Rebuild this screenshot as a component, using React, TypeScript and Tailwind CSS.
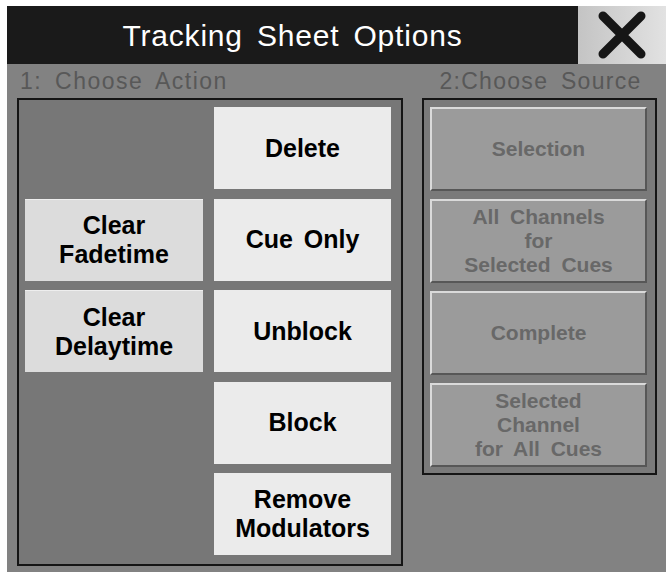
export default function App() {
  const actionsLeft = [
    { row: 2, label: ["Clear", "Fadetime"] },
    { row: 3, label: ["Clear", "Delaytime"] },
  ];
  const actionsRight = [
    ["Delete"],
    ["Cue Only"],
    ["Unblock"],
    ["Block"],
    ["Remove", "Modulators"],
  ];
  const sources = [
    ["Selection"],
    ["All Channels", "for", "Selected Cues"],
    ["Complete"],
    ["Selected", "Channel", "for All Cues"],
  ];

  return (
    <div className="w-[666px] h-[572px] bg-white pt-[6px] pl-[7px] overflow-hidden" style={{ fontFamily: '"Liberation Sans", Arial, sans-serif' }}>
      <div className="flex flex-col h-full bg-[#828282]">
        {/* title bar */}
        <div className="flex h-[58px]">
          <div className="flex-1 bg-[#1a1a1a] flex items-center justify-center">
            <span className="text-white text-[30px] tracking-[0.8px] [word-spacing:5px]">Tracking Sheet Options</span>
          </div>
          <button className="w-[88px] h-full bg-gradient-to-r from-[#c4c4c4] to-[#e2e2e2] flex items-center justify-center">
            <svg width="50" height="50" viewBox="0 0 50 50">
              <path d="M6 6 L44 44 M44 6 L6 44" stroke="#161616" strokeWidth="9" strokeLinecap="round" />
            </svg>
          </button>
        </div>

        <div className="flex pl-[10px] gap-[19px]">
          {/* 1: Choose Action */}
          <div className="w-[386px] flex flex-col">
            <div className="h-[34px] pl-[3px] flex items-center text-[23px] text-[#585858] tracking-[1.5px] [word-spacing:5px]">1: Choose Action</div>
            <div className="h-[468px] border-2 border-[#151515] bg-[#777777] pt-[7px] pl-[6px] grid grid-cols-[178px_177px] grid-rows-[82px_82px_82px_82px_82px] gap-x-[11px] gap-y-[9.5px]">
              {actionsLeft.map((a) => (
                <button
                  key={a.label.join()}
                  className={`col-start-1 ${a.row === 2 ? "row-start-2" : "row-start-3"} bg-[#dcdcdc] border-t border-[#eeeeee] text-black font-bold text-[25px] leading-[29px] flex flex-col items-center justify-center`}
                >
                  {a.label.map((l) => (
                    <span key={l}>{l}</span>
                  ))}
                </button>
              ))}
              {actionsRight.map((a, i) => (
                <button
                  key={a.join()}
                  className={`col-start-2 ${["row-start-1", "row-start-2", "row-start-3", "row-start-4", "row-start-5"][i]} bg-[#ebebeb] text-black font-bold text-[25px] leading-[29px] flex flex-col items-center justify-center [word-spacing:4px]`}
                >
                  {a.map((l) => (
                    <span key={l}>{l}</span>
                  ))}
                </button>
              ))}
            </div>
          </div>

          {/* 2:Choose Source */}
          <div className="w-[235px] flex flex-col">
            <div className="h-[34px] pl-[2px] flex items-center justify-center text-[23px] text-[#585858] tracking-[1.3px] [word-spacing:5px]">2:Choose Source</div>
            <div className="h-[377px] border-2 border-[#151515] bg-[#7a7a7a] pt-[7px] pl-[6px] flex flex-col gap-[8px]">
              {sources.map((s) => (
                <button
                  key={s.join()}
                  disabled
                  className="w-[217px] h-[84px] bg-[#9b9b9b] border-t-2 border-l-2 border-t-[#dadada] border-l-[#dadada] border-b-2 border-r-2 border-b-[#575757] border-r-[#575757] text-[#686868] font-bold text-[21px] leading-[24px] flex flex-col items-center justify-center [word-spacing:5px]"
                >
                  {s.map((l) => (
                    <span key={l}>{l}</span>
                  ))}
                </button>
              ))}
            </div>
          </div>
        </div>
      </div>
    </div>
  );
}
